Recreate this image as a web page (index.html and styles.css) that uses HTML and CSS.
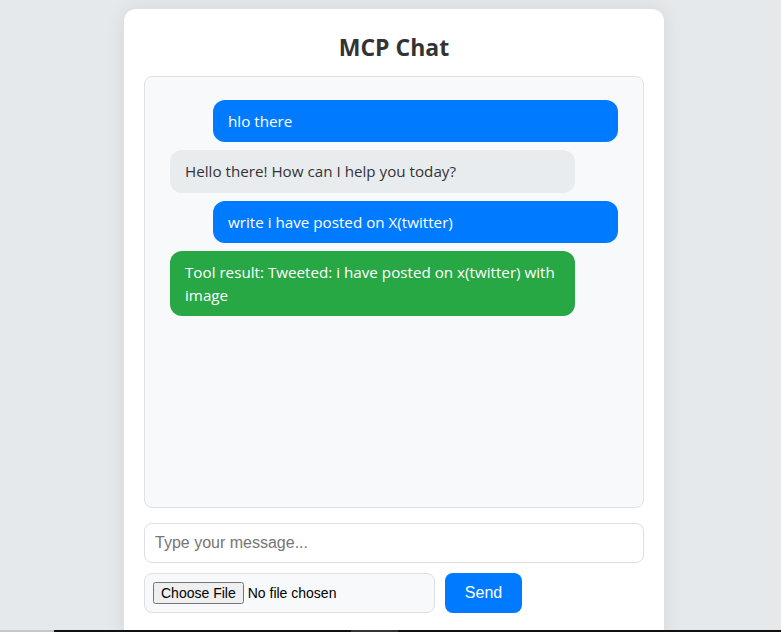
FILE: index.html
```html
<!DOCTYPE html>
<html lang="en">
<head>
<meta charset="utf-8">
<title>MCP Chat</title>
<link rel="stylesheet" href="styles.css">
</head>
<body>
<div class="page">
  <div class="card">
    <h1 class="title">MCP Chat</h1>
    <div class="chat">
      <div class="msg user">hlo there</div>
      <div class="msg bot">Hello there! How can I help you today?</div>
      <div class="msg user">write i have posted on X(twitter)</div>
      <div class="msg tool">Tool result: Tweeted: i have posted on x(twitter) with image</div>
    </div>
    <input class="text-input" type="text" placeholder="Type your message...">
    <div class="controls">
      <input class="file-input" type="file">
      <button class="send" type="button">Send</button>
    </div>
  </div>
</div>
<div class="taskbar"><span class="tb-left"></span><span class="tb-dark"></span><span class="tb-mid"></span><span class="tb-dark2"></span></div>
</body>
</html>
```

FILE: styles.css
```css
html, body {
  margin: 0;
  padding: 0;
  height: 100%;
  overflow: hidden;
}
body {
  background: #e6e9ec;
  font-family: "Open Sans", "Noto Sans", sans-serif;
  color: #333;
}
.page {
  padding: 9px 0 0 124px;
}
.card {
  width: 540px;
  box-sizing: border-box;
  background: #fff;
  border-radius: 12px;
  box-shadow: 0 0 20px rgba(0, 0, 0, 0.08);
  padding: 20px 20px 40px;
  display: flex;
  flex-direction: column;
}
.title {
  margin: 0 0 11px;
  font-size: 23px;
  line-height: 36px;
  font-weight: 700;
  text-align: center;
  color: #333;
}
.chat {
  height: 432px;
  box-sizing: border-box;
  background: #f8f9fa;
  border: 1px solid #dee2e6;
  border-radius: 8px;
  padding: 23px 25px;
  display: flex;
  flex-direction: column;
  gap: 8px;
}
.msg {
  width: 405px;
  box-sizing: border-box;
  padding: 10px 15px;
  border-radius: 12px;
  font-size: 15.2px;
  line-height: 22.4px;
}
.user {
  align-self: flex-end;
  background: #007bff;
  color: #fff;
}
.bot {
  align-self: flex-start;
  background: #e9ecef;
  color: #333;
}
.tool {
  align-self: flex-start;
  background: #28a745;
  color: #fff;
}
.text-input {
  margin-top: 15px;
  height: 40px;
  box-sizing: border-box;
  border: 1px solid #dcdfe3;
  border-radius: 8px;
  padding: 0 10px;
  font-family: "Liberation Sans", Arial, sans-serif;
  font-size: 16px;
  color: #333;
  outline: none;
}
.text-input::placeholder {
  color: #757575;
}
.controls {
  margin-top: 10px;
  display: flex;
  gap: 10px;
}
.file-input {
  width: 291px;
  height: 40px;
  box-sizing: border-box;
  background: #f8f9fa;
  border: 1px solid #dcdfe3;
  border-radius: 8px;
  padding: 8px 8px;
  font-family: "Liberation Sans", Arial, sans-serif;
  font-size: 14px;
  color: #000;
}
.send {
  width: 77px;
  height: 40px;
  border: none;
  border-radius: 8px;
  background: #007bff;
  color: #fff;
  font-family: "Liberation Sans", Arial, sans-serif;
  font-size: 16px;
  padding: 0;
}
.taskbar {
  position: fixed;
  left: 0;
  right: 0;
  bottom: 0;
  height: 2px;
  display: flex;
}
.tb-left { width: 54px; background: #c8c8c8; }
.tb-dark { width: 297px; background: #111; }
.tb-mid { width: 47px; background: #333; }
.tb-dark2 { flex: 1; background: #111; }
```
